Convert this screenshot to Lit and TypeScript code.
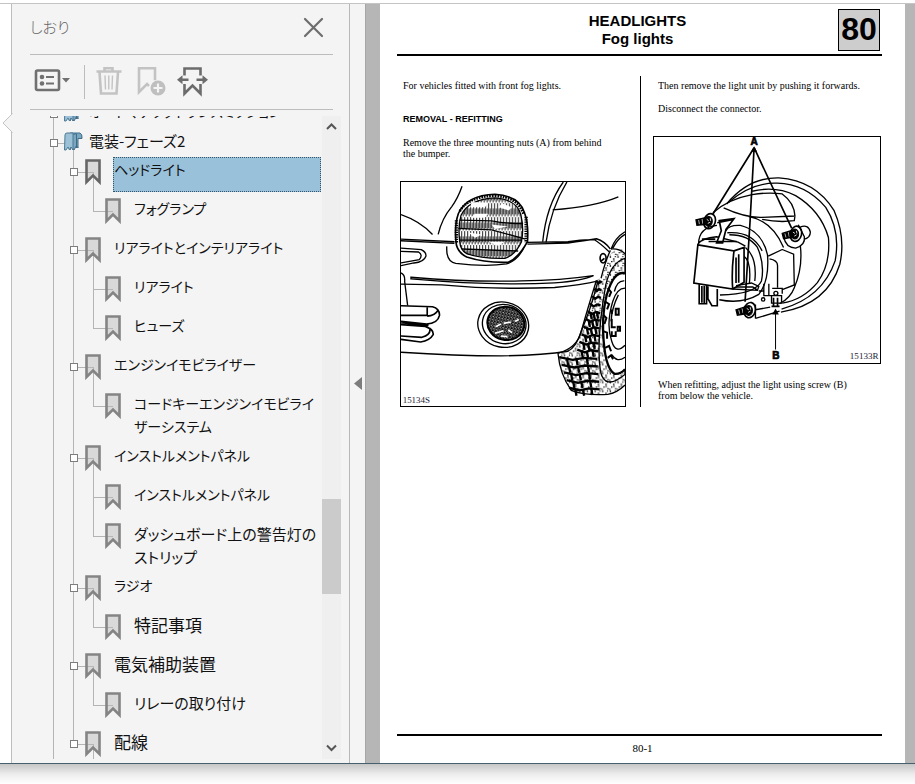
import { LitElement, html, svg, css, nothing } from "lit";
import { customElement, property } from "lit/decorators.js";
import { classMap } from "lit/directives/class-map.js";

interface Bookmark {
  label: string;
  selected?: boolean;
  children?: Bookmark[];
}

const BOOKMARKS: Bookmark[] = [
  { label: "オートマチックトランスミッション", children: [] },
  {
    label: "電装-フェーズ2",
    children: [
      { label: "ヘッドライト", selected: true, children: [{ label: "フォグランプ" }] },
      { label: "リアライトとインテリアライト", children: [{ label: "リアライト" }, { label: "ヒューズ" }] },
      { label: "エンジンイモビライザー", children: [{ label: "コードキーエンジンイモビライザーシステム" }] },
      {
        label: "インストルメントパネル",
        children: [{ label: "インストルメントパネル" }, { label: "ダッシュボード上の警告灯のストリップ" }],
      },
      { label: "ラジオ", children: [{ label: "特記事項" }] },
      { label: "電気補助装置", children: [{ label: "リレーの取り付け" }] },
      { label: "配線", children: [{ label: "" }] },
    ],
  },
];

/* Kana-only labels are set smaller than labels in kanji; mixed ones lie between. */
const script = (label: string) => {
  const kanji = /[\u4e00-\u9fff]/.test(label);
  const kana = /[\u3040-\u30ff]/.test(label);
  return kanji && kana ? "mixed" : kanji ? "kanji" : "kana";
};

@customElement("bookmark-row")
class BookmarkRow extends LitElement {
  @property({ attribute: false }) item!: Bookmark;
  @property({ type: Number }) level = 0;
  @property({ type: Boolean }) last = false;
  @property({ type: Boolean }) branch = false;

  static styles = css`
    :host { display: block; }
    .row { display: flex; min-height: 39px; }
    .row.top { min-height: 29px; }
    .cell { flex: none; width: 20px; background-repeat: no-repeat; }
    .line {
      background-image: linear-gradient(#b4b4b4, #b4b4b4);
      background-size: 1px 100%;
      background-position: 9px 0;
    }
    .tee {
      background-image: linear-gradient(#b4b4b4, #b4b4b4), linear-gradient(#b4b4b4, #b4b4b4);
      background-size: 1px 100%, 11px 1px;
      background-position: 9px 0, 9px 15px;
    }
    .tee.end { background-size: 1px 16px, 11px 1px; }
    .icon svg { display: block; }
    .stem {
      background-image: linear-gradient(#b4b4b4, #b4b4b4), linear-gradient(#b4b4b4, #b4b4b4);
      background-size: 10px 1px, 1px 100%;
      background-position: 0 15px, 9px 16px;
    }
    .leaf {
      background-image: linear-gradient(#b4b4b4, #b4b4b4);
      background-size: 9px 1px;
      background-position: 0 15px;
    }
    .box {
      display: block; box-sizing: border-box; width: 8px; height: 8px; margin: 11px 0 0 6px; padding: 0;
      border: 1px solid #7d7d7d; border-radius: 0; background: #fff;
    }
    .label {
      flex: 1; box-sizing: border-box; min-height: 35px; margin: 0 0 4px 9px; padding: 1px 0 1px 1px;
      color: #111; text-decoration: none; border: 0;
    }
    .kana { font-size: 14px; }
    .mixed { font-size: 15px; }
    .kanji { font-size: 17px; }
    .top .label { min-height: 25px; margin-left: 5px; padding-left: 0; }
    .selected { background: #9ac1da; outline: 1px dotted #34546b; outline-offset: -1px; }
  `;

  render() {
    const { item, level } = this;
    const kids = !!item.children;
    const top = level === 0;
    const cells = [];
    for (let i = 0; i < level; i++) {
      const on = i === 0 || (i === 1 && !this.branch);
      cells.push(html`<span class="cell ${on ? "line" : ""}"></span>`);
    }
    return html`
      <div class="row ${top ? "top" : ""}">
        ${cells}
        <span class=${classMap({ cell: true, tee: true, end: this.last })}>
          ${kids ? html`<button class="box" aria-label="展開"></button>` : nothing}
        </span>
        <span class=${classMap({ cell: true, icon: true, stem: kids && !!item.children!.length, leaf: !kids })}>
          ${top
            ? html`<svg width="20" height="26" viewBox="0 0 20 26">
                <path d="M6 5h10q2.500 1 2 5.500h-4V20l-1.500-2.500L10 22l-3-3-1 3z" fill="#7ba6c0" stroke="#3f6c89" />
                <path d="M1 7q0-2 2-2h6v17l-2-3-1.500 3L4 19l-2 3H0.500z" fill="#9cc1d7" stroke="#4c7995" />
                <path d="M9.500 7q1-2 3-1v14" fill="none" stroke="#3f6c89" />
              </svg>`
            : html`<svg width="20" height="28" viewBox="0 0 20 28">
                <path d="M2.500 3.500h13v21.500L9 18.500L2.500 25z" fill="#b9b9b9" fill-opacity=".45"
                  stroke=${item.selected ? "#666" : "#848484"} stroke-width="2.600" />
              </svg>`}
        </span>
        <a href="#" class=${classMap({ label: true, [script(item.label)]: true, selected: !!item.selected })}>${item.label}</a>
      </div>
    `;
  }
}

@customElement("bookmarks-panel")
class BookmarksPanel extends LitElement {
  static styles = css`
    :host {
      display: flex; flex-direction: column; box-sizing: border-box; min-height: 0; position: relative;
      background: #f4f4f4; border-left: 1px solid #bdbdbd; border-right: 1px solid #b8b8b8;
      font-family: "Noto Sans CJK JP", sans-serif;
    }
    button { border: 0; padding: 0; background: none; display: block; }
    svg { display: block; }
    .notch { position: absolute; left: -10px; top: 109px; }
    header { display: flex; align-items: center; height: 50px; margin: 0 16px 0 18px; border-bottom: 1px solid #bcbcbc; }
    h1 { flex: 1; margin: 0; padding-bottom: 4px; font-size: 15px; line-height: 24px; font-weight: 300; color: #666; font-feature-settings: "palt"; }
    .close { margin: 0 9px 4px 0; }
    .tools { display: flex; align-items: center; height: 54px; margin: 0 16px 0 18px; border-bottom: 1px solid #bcbcbc; }
    .tools i { width: 1px; height: 34px; margin: 0 11px 0 14px; background: #bcbcbc; }
    .tools .add { margin: 0 11px 0 15px; }
    .body { flex: 1; display: flex; min-height: 0; margin: 6px 8px 4px 32px; overflow: hidden; }
    .tree {
      flex: 1; min-width: 0; overflow: hidden; margin-right: 1px;
      font-size: 17px; line-height: 23px; font-weight: 400; font-feature-settings: "palt";
      line-break: anywhere; word-break: break-all;
    }
    .rows { margin-top: -17px; }
    .scroll { width: 19px; background: #efefef; display: flex; flex-direction: column; align-items: center; }
    .track { flex: 1; display: flex; flex-direction: column; width: 100%; }
    .track::before { content: ""; flex: 363; }
    .track::after { content: ""; flex: 145; }
    .thumb { flex: 95; background: #cbcbcb; }
  `;

  render() {
    const rows: unknown[] = [];
    const add = (list: Bookmark[], level: number, inLast: boolean) =>
      list.forEach((item, i) => {
        const last = level > 0 && i === list.length - 1;
        rows.push(html`<bookmark-row .item=${item} .level=${level} .last=${last} .branch=${inLast}></bookmark-row>`);
        if (item.children) add(item.children, level + 1, last);
      });
    add(BOOKMARKS, 0, false);
    return html`
      <svg class="notch" width="11" height="20" viewBox="0 0 11 20">
        <path d="M10.500 0.500L1 10l9.500 9.500" fill="#f4f4f4" stroke="#c4c4c4" />
      </svg>
      <header>
        <h1>しおり</h1>
        <button class="close" aria-label="閉じる">
          <svg width="21" height="21" viewBox="0 0 21 21"><path d="M2 2l17 17M19 2L2 19" stroke="#6d6d6d" stroke-width="2.200" stroke-linecap="round" /></svg>
        </button>
      </header>
      <div class="tools">
        <button aria-label="オプション">
          <svg width="40" height="30" viewBox="0 0 40 30">
            <rect x="6" y="3.500" width="23" height="19.500" rx="1.500" fill="none" stroke="#707070" stroke-width="2.600" />
            <circle cx="12" cy="10" r="2.300" fill="#707070" /><circle cx="12" cy="16.500" r="2.300" fill="#707070" />
            <path d="M16 10h8M16 16.500h8" stroke="#707070" stroke-width="2" />
            <path d="M32 11h8l-4 4.500z" fill="#707070" />
          </svg>
        </button>
        <i></i>
        <button aria-label="削除">
          <svg width="26" height="30" viewBox="0 0 26 30">
            <path d="M0.500 4.500h25M8.500 4V1.300h8v3M3.500 5l1.500 21.500h15.500L22 5" fill="none" stroke="#c3c3c3" stroke-width="2.600" />
            <path d="M9 8.500l.5 14M12.800 8.500v14M16.500 8.500l-.5 14" stroke="#c3c3c3" stroke-width="1.400" />
          </svg>
        </button>
        <button class="add" aria-label="追加">
          <svg width="29" height="30" viewBox="0 0 29 30">
            <path d="M12 19L10 17L2 25V1.300h16v12" fill="none" stroke="#c3c3c3" stroke-width="2.600" />
            <circle cx="21" cy="21" r="7.500" fill="#bfbfbf" />
            <path d="M16.500 21h9M21 16.500v9" stroke="#f4f4f4" stroke-width="2.200" />
          </svg>
        </button>
        <button aria-label="現在のしおりを検索">
          <svg width="31" height="30" viewBox="0 0 31 30">
            <path d="M7.500 8.500V1.500h16v7M7.500 17V26.500l8-8l8 8V17" fill="none" stroke="#6c6c6c" stroke-width="2.600" />
            <path d="M3 12.800h8.500M19.500 12.800h8.500" stroke="#6c6c6c" stroke-width="2.400" />
            <path d="M0 12.800L5.500 8.300v9zM31 12.800L25.500 8.300v9z" fill="#6c6c6c" />
          </svg>
        </button>
      </div>
      <div class="body">
        <nav class="tree"><div class="rows">${rows}</div></nav>
        <div class="scroll">
          <svg width="19" height="20" viewBox="0 0 19 20"><path d="M5 13l4.500-4.500L14 13" fill="none" stroke="#555" stroke-width="2" /></svg>
          <div class="track"><div class="thumb"></div></div>
          <svg width="19" height="20" viewBox="0 0 19 20"><path d="M5 6.500L9.500 11L14 6.500" fill="none" stroke="#555" stroke-width="2" /></svg>
        </div>
      </div>
    `;
  }
}

const treads = () => {
  const out = [];
  for (let i = 0; i < 15; i++) {
    const y = 318 + i * 23;
    const left = y < 536 ? 606 - (y - 318) * 0.28 : 490 + (y - 536) * 0.32;
    const right = y < 536 ? 622 - (y - 318) * 0.05 : 606 + (y - 520) * 0.08;
    const w = right - left;
    out.push(svg`<path d="M${left} ${y}l${w * 0.35} 8l${w * 0.3} -6l${w * 0.35} 3" stroke-width="7" />`);
    if (y > 400)
      out.push(svg`<path d="M${left + w * 0.2} ${y + 2}l4 22M${left + w * 0.45} ${y + 4}l4 20M${left + w * 0.72} ${y}l4 22" stroke-width="7" />`);
  }
  return out;
};

const bumper = html`
  <svg viewBox="17 20 675 675" role="img" aria-label="15134S" fill="none" stroke="#000" stroke-width="4">
    <defs>
      <pattern id="ribs" width="9" height="42" patternUnits="userSpaceOnUse">
        <path d="M2 0v34M6.500 16v24" stroke="#000" stroke-width="2.600" />
      </pattern>
      <pattern id="mesh" width="9" height="9" patternUnits="userSpaceOnUse">
        <rect width="9" height="9" fill="#000" stroke="none" />
        <path d="M1 2h5M5 6h4" stroke="#fff" stroke-width="2.400" />
      </pattern>
      <pattern id="grain" width="23" height="27" patternUnits="userSpaceOnUse">
        <path d="M2 3h4M12 9h4M6 17h4M18 22h4M17 2h3M1 24h3M13 15h3" stroke="#000" stroke-width="4" />
      </pattern>
    </defs>
    <path d="M17 118Q75 138 112 178M201 33Q188 70 170 94Q140 130 129 178" />
    <path d="M506 20Q455 90 444 200M517 20Q468 100 454 202M474 104Q600 95 672 65" />
    <path d="M17 192L178 200M17 197L178 205M398 207L520 204Q570 196 606 191Q630 198 648 222M394 202L520 200Q570 192 600 194Q618 205 644 230" />
    <path d="M692 170Q662 188 650 222M692 178Q670 190 655 220" />
    <path d="M155 214Q152 260 182 265Q270 276 335 267Q372 255 390 212" />
    <path d="M190 115Q215 60 300 57Q376 62 390 115Q402 150 398 200Q370 250 340 262Q270 264 215 246Q190 234 184 210Q176 155 190 115z" fill="#fff" stroke-width="5" />
    <path d="M198 120Q222 72 300 68Q365 72 378 118Q388 160 380 200Q362 240 330 250Q260 252 215 236Q196 226 194 200Q188 155 198 120z" fill="url(#ribs)" stroke-width="4" />
    <path d="M193 135L290 137Q330 145 385 145M190 160L290 164Q330 175 392 192M192 195H380M200 222L370 228" stroke-width="4" />
    <path d="M230 80l50 4l-10 12l-45 0zM320 84l30 12l-8 10l-30 -10zM240 116l40 0l-12 12l-40 0zM290 148l50 6l-40 8zM220 172l40 6l-20 10zM280 200l50 0l-20 12z" fill="#fff" stroke="none" />
    <path d="M394 125v78M184 135v70" stroke-width="10" stroke-dasharray="4 3" />
    <path d="M194 108Q222 62 300 62Q368 64 386 116" stroke-width="8" stroke-dasharray="5 3" />
    <path d="M17 219L78 224Q94 232 92 244Q86 262 56 264L17 272M17 229L70 231Q84 240 72 254L17 264M17 294Q30 300 28 320L37 392" />
    <path d="M47 307Q220 322 380 318Q500 316 597 302Q560 318 480 324Q300 334 47 312zM17 328L140 330Q300 345 480 338Q560 330 612 318" />
    <path d="M17 393L112 396Q134 402 133 422Q128 446 94 448L17 440M17 422H96V398M17 450L90 455Q116 464 114 480Q104 498 76 502L17 494M17 484L80 488Q108 480 104 460M96 424Q118 424 130 405M17 444L100 452" stroke-width="5" />
    <path d="M17 533Q180 544 320 544Q440 542 520 530Q545 518 560 470Q590 400 610 320" />
    <ellipse cx="325" cy="450" rx="77" ry="68" transform="rotate(12 325 450)" stroke-width="4" />
    <ellipse cx="328" cy="448" rx="66" ry="59" transform="rotate(12 328 448)" />
    <ellipse cx="333" cy="446" rx="56" ry="50" transform="rotate(12 333 446)" fill="url(#mesh)" stroke-width="6" />
    <path d="M302 456l16 -8M326 446l22 -4M360 440l12 -6M300 476l26 -8M340 466l12 8M318 484l20 2" stroke="#fff" stroke-width="5" />
    <ellipse cx="626" cy="250" rx="9" ry="14" stroke-width="5" /><path d="M620 258l10 -8" stroke-width="5" />
    <path d="M692 225Q640 210 626 300Q590 480 606 660L640 662Q670 656 692 632z" fill="url(#grain)" stroke="none" />
    <path d="M650 222Q675 220 692 236M648 226Q632 260 620 310" />
    <path d="M606 316Q580 400 560 470Q548 520 490 536Q496 600 530 648Q570 664 640 660Q668 656 692 632" />
    <path d="M606 316Q580 400 560 470Q548 520 490 536Q496 600 530 648Q570 660 606 660Q594 480 624 306z" fill="url(#grain)" stroke="none" />
    ${treads()}
    <path d="M692 250Q650 262 634 330Q604 500 618 590Q630 650 692 600V250" fill="#fff" stroke="none" />
    <path d="M692 250Q650 262 634 330Q604 500 618 590Q630 650 692 600V250" fill="url(#grain)" />
    <path d="M692 296Q672 288 655 316Q624 370 626 470Q630 580 660 598Q678 600 692 584" fill="#fff" stroke-width="7" />
    <path d="M692 340Q668 340 655 380Q634 450 652 500Q664 540 692 512M672 360Q652 400 650 440M690 318Q668 316 660 350M692 548Q668 566 652 540" />
    <path d="M640 340l10 12l-6 14M632 380l12 8l-6 16M626 420l10 10l-6 18M628 470l10 4v18M632 520l12 -6l6 16M640 550l10 -8l6 12" stroke-width="6" />
    <path d="M664 402v18h9v-18zM652 432v26h12M652 470v14h12v-14M670 456h7v12h-7zM652 404v14" stroke-width="6" />
    <text x="22" y="687" class="ref">15134S</text>
  </svg>
`;

const bolt = (x: number, y: number, tilt: number) => svg`
  <g transform="translate(${x} ${y}) rotate(${tilt})">
    <path d="M-36 -4L-4 -14L4 6L-32 12z" fill="#000" stroke-width="4" />
    <path d="M-28 -4l3 12M-18 -8l3 14" stroke="#fff" stroke-width="2" />
    <ellipse cx="4" cy="-4" rx="17" ry="23" transform="rotate(14)" stroke-width="5" />
    <ellipse cx="2" cy="-2" rx="11" ry="15" fill="#000" stroke-width="3" />
    <path d="M-4 -8l6 4M0 4l7 -4M6 -12l2 8" stroke="#fff" stroke-width="2.500" />
  </g>`;

const unit = html`
  <svg viewBox="17 20 675 675" role="img" aria-label="15133R" fill="none" stroke="#000" stroke-width="4">
    <path d="M234 220Q300 140 390 142Q500 150 555 240Q590 320 572 400Q535 520 396 543" />
    <path d="M240 215Q310 155 385 158Q470 160 530 230Q575 300 558 390Q520 500 398 534" />
    <path d="M310 182Q380 165 440 195Q515 240 538 320Q545 400 505 455Q460 508 400 516" />
    <path d="M193 246Q240 205 310 192Q360 184 400 190Q436 216 438 256L340 260Q290 262 225 232M340 266Q390 276 436 270L438 256M300 258Q370 270 404 350" />
    <path d="M454 344Q462 410 436 470Q425 500 392 518M400 356L434 370L436 462L400 476M358 376L400 356M362 384Q386 388 386 404V470" />
    <path d="M232 300Q240 282 275 284Q340 300 356 372Q362 450 330 490Q280 520 212 506" />
    <path d="M242 312Q300 312 326 350Q348 400 338 450Q320 490 214 492M236 306Q310 300 340 360" />
    <path d="M290 350Q326 380 318 450M285 376Q308 390 302 456" />
    <path d="M150 340Q150 290 205 284M148 340Q160 322 204 318L268 334L290 346" />
    <path d="M148 342L256 360Q248 420 252 474L136 456Q142 400 148 342zM256 360L286 350V454L252 474M262 380V456M270 370v85" fill="#fff" stroke-width="5" />
    <path d="M212 270L256 264L232 296L222 336H204L218 300zM206 276l48 -10M160 325h40M180 332l84 0" fill="#fff" stroke-width="5" />
    <path d="M152 460V518H174V462M174 496L190 524H206V474M160 465v50M167 464v52M178 466v40" stroke-width="5" />
    <path d="M252 474L326 478L330 466L308 456L262 464M262 468h50l12 8M345 458V494H398V516H368V494M360 458V494M330 480h14M370 472h30v16" />
    <circle cx="381" cy="487" r="6" /><circle cx="343" cy="505" r="5" />
    <path d="M374 500v26M386 500v26M368 526h24" stroke-width="5" />
    <path d="M452 290Q478 278 484 304Q484 322 464 326M405 320Q410 350 440 352Q470 342 466 318L448 282" />
    <path d="M320 536L364 528M320 562L392 540M320 520v42" />
    ${bolt(178, 274, 4)} ${bolt(436, 312, 0)} ${bolt(298, 540, 0)}
    <path d="M316 52L193 250M316 52L304 270L289 512M316 52L428 292" stroke-width="5" />
    <path d="M380 655V548" stroke-width="3" />
    <path d="M316 48l-9 16h18zM380 532l-10 18h20z" fill="#000" stroke="none" />
    <text x="305" y="44" class="key">A</text>
    <text x="370" y="683" class="key">B</text>
    <text x="602" y="684" class="ref">15133R</text>
  </svg>
`;

@customElement("manual-page")
class ManualPage extends LitElement {
  static styles = css`
    :host {
      display: flex; flex-direction: column; box-sizing: border-box; background: #fff; color: #000;
      padding: 5px 23px 0 17px; font: 10px/11px "Liberation Serif", serif;
    }
    .head { display: grid; grid-template-columns: 40px 1fr 44px; height: 45px; border-bottom: 2px solid #000; }
    h2 { grid-column: 2; margin: 3px 0 0; text-align: center; font: bold 15px/18px "Liberation Sans", sans-serif; }
    .chapter {
      box-sizing: border-box; width: 42px; height: 42px; border: 1px solid #000; background: #cdcdcd;
      font: bold 32px/39px "Liberation Sans", sans-serif; display: flex; justify-content: center;
    }
    .cols { display: grid; grid-template-columns: 244px 1fr; margin-top: 20px; }
    .col { padding: 4px 14px 0 3px; border-right: 1px solid #000; }
    .col + .col { padding: 4px 1px 6px 12px; border: 0; }
    p, h3 { margin: 0 0 12px 3px; }
    .col + .col p { margin-left: 5px; }
    h3 { margin-top: 23px; font: bold 9px/11px "Liberation Sans", sans-serif; }
    figure { margin: 22px 0 0; border: 1px solid #000; }
    .col + .col figure { margin-bottom: 15px; }
    figure svg { display: block; width: 100%; }
    .col + .col p:last-child { margin-bottom: 0; }
    .ref { font: 27px "Liberation Serif", serif; fill: #223; stroke: none; }
    .key { font: bold 30px "Liberation Sans", sans-serif; fill: #000; stroke: #000; stroke-width: 2px; }
    footer {
      margin-top: auto; border-top: 2px solid #000; padding: 7px 0 9px 6px; text-align: center;
      font: 11px/11px "Liberation Serif", serif;
    }
  `;

  render() {
    return html`
      <div class="head">
        <h2>HEADLIGHTS<br />Fog lights</h2>
        <div class="chapter">80</div>
      </div>
      <div class="cols">
        <section class="col">
          <p>For vehicles fitted with front fog lights.</p>
          <h3>REMOVAL - REFITTING</h3>
          <p>Remove the three mounting nuts (A) from behind<br />the bumper.</p>
          <figure>${bumper}</figure>
        </section>
        <section class="col">
          <p>Then remove the light unit by pushing it forwards.</p>
          <p>Disconnect the connector.</p>
          <figure>${unit}</figure>
          <p>When refitting, adjust the light using screw (B)<br />from below the vehicle.</p>
        </section>
      </div>
      <footer>80-1</footer>
    `;
  }
}

@customElement("app-root")
class AppRoot extends LitElement {
  static styles = css`
    :host { display: flex; flex-direction: column; height: 100vh; background: #fff; }
    main {
      flex: 1; min-height: 0; display: grid; grid-template: minmax(0, 1fr) / 339px 15px 1fr; margin-top: 3px;
      border-top: 1px solid #c4c4c4; border-bottom: 1px solid #46606f; padding-left: 11px;
    }
    .collapse {
      border: 0; padding: 0; background: #f4f4f4; display: flex; align-items: center; justify-content: center;
    }
    .viewer { display: grid; background: #b6b6b6; padding: 0 10px 0 14px; border-left: 1px solid #a6a6a6; }
    .shade { height: 20px; background: linear-gradient(#c6c6c6, #ececec 50%, #fff); }
  `;

  render() {
    return html`
      <main>
        <bookmarks-panel></bookmarks-panel>
        <button class="collapse" aria-label="パネルを閉じる">
          <svg width="8" height="13" viewBox="0 0 8 13"><path d="M8 0v13L0 6.500z" fill="#7c7c7c" /></svg>
        </button>
        <div class="viewer"><manual-page></manual-page></div>
      </main>
      <div class="shade"></div>
    `;
  }
}
